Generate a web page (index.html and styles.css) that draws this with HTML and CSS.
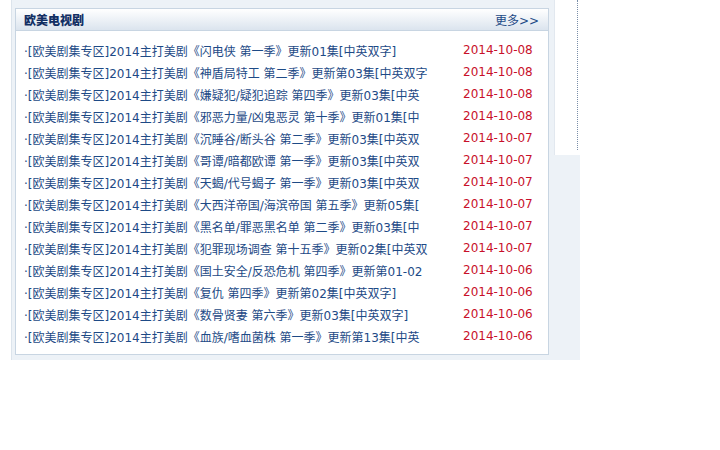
FILE: index.html
```html
<!DOCTYPE html>
<html lang="zh-CN">
<head>
    <meta charset="UTF-8">
    <title>欧美电视剧</title>
    <link rel="stylesheet" href="styles.css">
</head>
<body>
    <div class="page">
        <div class="box">
            <div class="box-head">
                <h3>欧美电视剧</h3>
                <a href="#" class="more">更多&gt;&gt;</a>
            </div>
            <ul class="list">
                <li><a href="#">·[欧美剧集专区]2014主打美剧《闪电侠 第一季》更新01集[中英双字]</a><span>2014-10-08</span></li>
                <li><a href="#">·[欧美剧集专区]2014主打美剧《神盾局特工 第二季》更新第03集[中英双字</a><span>2014-10-08</span></li>
                <li><a href="#">·[欧美剧集专区]2014主打美剧《嫌疑犯/疑犯追踪 第四季》更新03集[中英</a><span>2014-10-08</span></li>
                <li><a href="#">·[欧美剧集专区]2014主打美剧《邪恶力量/凶鬼恶灵 第十季》更新01集[中</a><span>2014-10-08</span></li>
                <li><a href="#">·[欧美剧集专区]2014主打美剧《沉睡谷/断头谷 第二季》更新03集[中英双</a><span>2014-10-07</span></li>
                <li><a href="#">·[欧美剧集专区]2014主打美剧《哥谭/暗都欧谭 第一季》更新03集[中英双</a><span>2014-10-07</span></li>
                <li><a href="#">·[欧美剧集专区]2014主打美剧《天蝎/代号蝎子 第一季》更新03集[中英双</a><span>2014-10-07</span></li>
                <li><a href="#">·[欧美剧集专区]2014主打美剧《大西洋帝国/海滨帝国 第五季》更新05集[</a><span>2014-10-07</span></li>
                <li><a href="#">·[欧美剧集专区]2014主打美剧《黑名单/罪恶黑名单 第二季》更新03集[中</a><span>2014-10-07</span></li>
                <li><a href="#">·[欧美剧集专区]2014主打美剧《犯罪现场调查 第十五季》更新02集[中英双</a><span>2014-10-07</span></li>
                <li><a href="#">·[欧美剧集专区]2014主打美剧《国土安全/反恐危机 第四季》更新第01-02</a><span>2014-10-06</span></li>
                <li><a href="#">·[欧美剧集专区]2014主打美剧《复仇 第四季》更新第02集[中英双字]</a><span>2014-10-06</span></li>
                <li><a href="#">·[欧美剧集专区]2014主打美剧《数骨贤妻 第六季》更新03集[中英双字]</a><span>2014-10-06</span></li>
                <li><a href="#">·[欧美剧集专区]2014主打美剧《血族/嗜血菌株 第一季》更新第13集[中英</a><span>2014-10-06</span></li>
            </ul>
        </div>
        <div class="side">
            <div class="side-line"></div>
        </div>
    </div>
</body>
</html>
```

FILE: styles.css
```css
body {
    margin: 0;
    font-family: "DejaVu Sans", "Noto Sans CJK SC", sans-serif;
    font-size: 12px;
    background: #fff;
}
.page {
    display: flex;
    align-items: flex-start;
    margin-left: 11px;
    width: 568px;
    padding-bottom: 5px;
    background: #edf2f7;
    border-left: 1px solid #dce4ec;
}
.box {
    width: 532px;
    margin: 8px 0 0 3px;
    background: #fff;
    border: 1px solid #c8d5e2;
}
.box-head {
    display: flex;
    justify-content: space-between;
    align-items: center;
    height: 21px;
    padding: 0 9px 0 8px;
    background: linear-gradient(#ffffff, #dbe4ee);
    border-bottom: 1px solid #c8d5e2;
}
.box-head h3 {
    margin: 0;
    font-size: 12px;
    font-weight: 900;
    color: #122f63;
    font-family: "Noto Sans CJK SC", sans-serif;
}
.more {
    color: #1d4a86;
    text-decoration: none;
    font-size: 12px;
}
.list {
    list-style: none;
    margin: 0;
    padding: 8px 0 7px 8px;
}
.list li {
    display: flex;
    align-items: center;
    height: 22px;
}
.list a {
    width: 439px;
    white-space: nowrap;
    overflow: hidden;
    color: #1d4a86;
    text-decoration: none;
    font-size: 12px;
}
.list span {
    color: #c8102a;
    font-size: 12px;
}
.side {
    width: 25px;
    height: 155px;
    margin-left: 5px;
    background: #fff;
    border-left: 1px solid #e2e8ef;
    display: flex;
    justify-content: flex-end;
}
.side-line {
    width: 0;
    height: 150px;
    margin-right: 2px;
    border-right: 1px dotted #7a8ea8;
}
```
